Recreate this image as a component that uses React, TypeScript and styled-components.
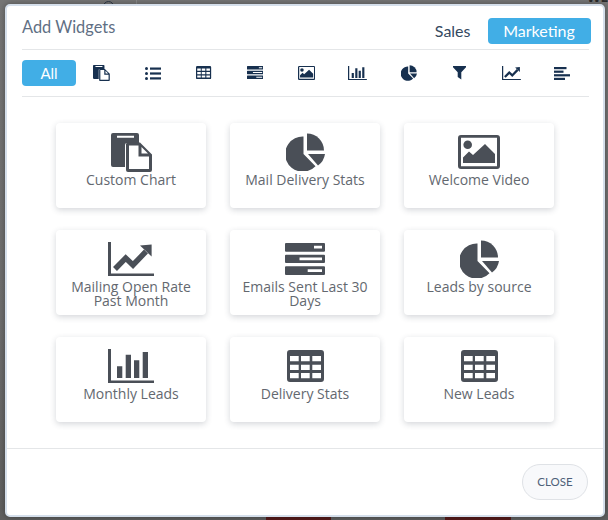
import React from "react";
import styled, { createGlobalStyle } from "styled-components";

const Global = createGlobalStyle`
  html, body { margin: 0; padding: 0; }
  body { background: #6b6b6b; font-family: "Open Sans", "Liberation Sans", sans-serif; }
`;

const Backdrop = styled.div`
  position: relative;
  width: 608px;
  height: 520px;
  overflow: hidden;
  background: linear-gradient(#767676 0, #6e6e6e 60%, #5f5f5f 100%);
  padding: 4px 3px 3px 5px;
  box-sizing: border-box;
`;

const BehindBlock = styled.div<{ $left: number; $width: number }>`
  position: absolute;
  left: ${(p) => p.$left}px;
  width: ${(p) => p.$width}px;
  bottom: 0;
  height: 5px;
  background: #551a1a;
`;

const BehindText = styled.div`
  position: absolute;
  top: -10px;
  left: 587px;
  font: 700 14px/14px "Open Sans", sans-serif;
  color: #2b2b2b;
`;

const BehindRing = styled.div`
  position: absolute;
  top: 1px;
  left: 103px;
  width: 9px;
  height: 9px;
  border: 1.5px solid #2f3a48;
  border-radius: 50%;
`;

const BehindRule = styled.div`
  position: absolute;
  top: 0;
  left: 136px;
  width: 1px;
  height: 5px;
  background: #8a8a8a;
`;

const Modal = styled.div`
  position: relative;
  height: 100%;
  box-sizing: border-box;
  background: #fff;
  border: 2px solid #d5dfeb;
  border-radius: 5px;
  display: flex;
  flex-direction: column;
  box-shadow: 0 0 6px rgba(0, 0, 0, 0.35);
`;

const Header = styled.div`
  margin: 0 14px 0 15px;
  height: 44px;
  box-sizing: border-box;
  border-bottom: 1px solid #e4e6e8;
  display: flex;
  justify-content: space-between;
  align-items: flex-start;
`;

const Title = styled.h2`
  margin: 11px 0 0;
  font: 400 16.4px/20px Lato, sans-serif;
  color: #5f6f84;
`;

const Tabs = styled.div`
  display: flex;
  align-items: center;
  gap: 17px;
  margin: 12px -1.5px 0 0;
`;

const Tab = styled.button<{ $active?: boolean }>`
  border: 0;
  padding: 0;
  height: 26px;
  width: ${(p) => (p.$active ? "103px" : "auto")};
  border-radius: 4px;
  background: ${(p) => (p.$active ? "#41aee6" : "transparent")};
  color: ${(p) => (p.$active ? "#fff" : "#34495f")};
  font: 400 16px/26px Lato, sans-serif;
`;

const FilterBar = styled.div`
  margin: 0 14px 0 15px;
  height: 47px;
  box-sizing: border-box;
  border-bottom: 1px solid #e4e6e8;
  display: flex;
  align-items: flex-start;
  padding-top: 10px;
`;

const AllButton = styled.button`
  width: 54px;
  height: 26px;
  border: 0;
  padding: 0;
  border-radius: 4px;
  background: #41aee6;
  color: #fff;
  font: 400 15px/26px Lato, sans-serif;
`;

const FilterIcon = styled.span`
  width: 51.2px;
  height: 26px;
  display: flex;
  align-items: center;
  justify-content: center;
  color: #17304f;
`;

const Grid = styled.div`
  flex: 1;
  display: grid;
  grid-template-columns: repeat(3, 150px);
  grid-auto-rows: 85px;
  column-gap: 24px;
  row-gap: 22px;
  padding: 26px 0 0 49px;
  align-content: start;
`;

const Card = styled.div`
  background: #fff;
  border-radius: 4px;
  box-shadow: 0 2px 6px rgba(40, 50, 70, 0.2);
  display: flex;
  flex-direction: column;
  align-items: center;
  padding-top: 9px;
  box-sizing: border-box;
`;

const CardIcon = styled.div`
  height: 40px;
  display: flex;
  align-items: center;
  justify-content: center;
  color: #4a4f57;
`;

const CardLabel = styled.div`
  margin-top: 1px;
  padding: 0 8px;
  font: 400 14px/14px "Open Sans", sans-serif;
  color: #63686f;
  text-align: center;
`;

const Footer = styled.div`
  height: 67px;
  box-sizing: border-box;
  border-top: 1px solid #e4e6e8;
  display: flex;
  justify-content: flex-end;
  align-items: flex-start;
  padding: 15px 15px 0 0;
`;

const CloseButton = styled.button`
  width: 66px;
  height: 36px;
  border-radius: 18px;
  border: 1px solid #dfe2e6;
  background: #f8f9fb;
  color: #4d6078;
  font: 400 11.5px/34px Lato, sans-serif;
  padding: 0;
`;

type IconName =
  | "copy" | "list" | "table" | "server" | "image" | "bars"
  | "pie" | "funnel" | "trend" | "align";

const ICONS: Record<IconName, { w: number; h: number; body: React.ReactNode }> = {
  copy: {
    w: 41, h: 39,
    body: (
      <>
        <path fillRule="evenodd" d="M2 0H26a2 2 0 0 1 2 2V10H16a2 2 0 0 0-2 2V34H2a2 2 0 0 1-2-2V2A2 2 0 0 1 2 0ZM6 2.7V4.7H23V2.7Z" />
        <path fillRule="evenodd" d="M16 9.5H29L41 21.5V37a2 2 0 0 1-2 2H17a2 2 0 0 1-2-2V11ZM18 12.5V36H38V23.5H27.5V12.5ZM30.5 14V20.5H37Z" />
      </>
    ),
  },
  list: {
    w: 16, h: 13,
    body: (
      <>
        <circle cx="1.5" cy="1.6" r="1.5" />
        <circle cx="1.5" cy="6.5" r="1.5" />
        <circle cx="1.5" cy="11.4" r="1.5" />
        <rect x="5" y="0.5" width="11" height="2.2" />
        <rect x="5" y="5.4" width="11" height="2.2" />
        <rect x="5" y="10.3" width="11" height="2.2" />
      </>
    ),
  },
  table: {
    w: 37, h: 32,
    body: (
      <path fillRule="evenodd" d="M3 0H34a3 3 0 0 1 3 3V29a3 3 0 0 1-3 3H3a3 3 0 0 1-3-3V3A3 3 0 0 1 3 0ZM3 6V11.3H11.7V6ZM14 6V11.3H22.7V6ZM25.3 6V11.3H34V6ZM3 14.7V20H11.7V14.7ZM14 14.7V20H22.7V14.7ZM25.3 14.7V20H34V14.7ZM3 23V28.3H11.7V23ZM14 23V28.3H22.7V23ZM25.3 23V28.3H34V23Z" />
    ),
  },
  server: {
    w: 40, h: 32,
    body: (
      <path fillRule="evenodd" d="M1 0H39a1 1 0 0 1 1 1V7.7a1 1 0 0 1-1 1H1a1 1 0 0 1-1-1V1A1 1 0 0 1 1 0ZM29 2.8V5.5H37V2.8ZM1 11.7H39a1 1 0 0 1 1 1V19a1 1 0 0 1-1 1H1a1 1 0 0 1-1-1V12.7a1 1 0 0 1 1-1ZM14.5 14.5V17.2H37V14.5ZM1 23.3H39a1 1 0 0 1 1 1V31a1 1 0 0 1-1 1H1a1 1 0 0 1-1-1V24.3a1 1 0 0 1 1-1ZM22.7 26.2V28.9H37V26.2Z" />
    ),
  },
  image: {
    w: 42, h: 34,
    body: (
      <>
        <path fillRule="evenodd" d="M3 0H39a3 3 0 0 1 3 3V31a3 3 0 0 1-3 3H3a3 3 0 0 1-3-3V3A3 3 0 0 1 3 0ZM3 2.7V31.3H39V2.7Z" />
        <circle cx="9.7" cy="9.7" r="4.3" />
        <path d="M5 28V22.5L11 16.5L15 20L27 9L37 19V28Z" />
      </>
    ),
  },
  bars: {
    w: 46, h: 34,
    body: (
      <path d="M0 0H3V31.5H46V34H0ZM9 17.3H14.3V29H9ZM17.7 5.7H23V29H17.7ZM26 11.3H31.3V29H26ZM34.7 3H40V29H34.7Z" />
    ),
  },
  pie: {
    w: 39, h: 38,
    body: (
      <>
        <path d="M17.5 3.5V21L29.5 33.2A17.6 17.6 0 1 1 17.5 3.5Z" />
        <path d="M21 0.5A17 17 0 0 1 38 17.5H21Z" />
        <path d="M22 21H39A17.5 17.5 0 0 1 32 32.6Z" />
      </>
    ),
  },
  funnel: {
    w: 13, h: 13.5,
    body: <path d="M0 0H13V1.3L8.3 6.3V13.5L4.7 11V6.3L0 1.3Z" />,
  },
  trend: {
    w: 46, h: 34,
    body: (
      <>
        <path d="M0 0H3V31.5H46V34H0Z" />
        <polyline points="7,27 17.7,16 25,23 38,9.5" fill="none" stroke="currentColor" strokeWidth="5.5" />
        <path d="M32 3.5L43.6 2.5V14.5Z" />
      </>
    ),
  },
  align: {
    w: 16, h: 13,
    body: (
      <>
        <rect width="12.5" height="2.2" y="0" />
        <rect width="9.5" height="2.2" y="3.6" />
        <rect width="16" height="2.2" y="7.2" />
        <rect width="11" height="2.2" y="10.8" />
      </>
    ),
  },
};

const Glyph = ({ name, scale = 1 }: { name: IconName; scale?: number }) => {
  const { w, h, body } = ICONS[name];
  return (
    <svg width={w * scale} height={h * scale} viewBox={`0 0 ${w} ${h}`} fill="currentColor" aria-hidden>
      {body}
    </svg>
  );
};

const FILTERS: { name: IconName; scale: number }[] = [
  { name: "copy", scale: 0.41 },
  { name: "list", scale: 1 },
  { name: "table", scale: 0.41 },
  { name: "server", scale: 0.41 },
  { name: "image", scale: 0.41 },
  { name: "bars", scale: 0.41 },
  { name: "pie", scale: 0.41 },
  { name: "funnel", scale: 1 },
  { name: "trend", scale: 0.41 },
  { name: "align", scale: 1 },
];

const CARDS: { icon: IconName; label: string }[] = [
  { icon: "copy", label: "Custom Chart" },
  { icon: "pie", label: "Mail Delivery Stats" },
  { icon: "image", label: "Welcome Video" },
  { icon: "trend", label: "Mailing Open Rate Past Month" },
  { icon: "server", label: "Emails Sent Last 30 Days" },
  { icon: "pie", label: "Leads by source" },
  { icon: "bars", label: "Monthly Leads" },
  { icon: "table", label: "Delivery Stats" },
  { icon: "table", label: "New Leads" },
];

export default function App() {
  return (
    <Backdrop>
      <Global />
      <BehindRing />
      <BehindRule />
      <BehindText>WEL</BehindText>
      <BehindBlock $left={266} $width={65} />
      <BehindBlock $left={445} $width={66} />
      <Modal>
        <Header>
          <Title>Add Widgets</Title>
          <Tabs>
            <Tab>Sales</Tab>
            <Tab $active>Marketing</Tab>
          </Tabs>
        </Header>
        <FilterBar>
          <AllButton>All</AllButton>
          {FILTERS.map((f) => (
            <FilterIcon key={f.name}>
              <Glyph name={f.name} scale={f.scale} />
            </FilterIcon>
          ))}
        </FilterBar>
        <Grid>
          {CARDS.map((c) => (
            <Card key={c.label}>
              <CardIcon>
                <Glyph name={c.icon} />
              </CardIcon>
              <CardLabel>{c.label}</CardLabel>
            </Card>
          ))}
        </Grid>
        <Footer>
          <CloseButton>CLOSE</CloseButton>
        </Footer>
      </Modal>
    </Backdrop>
  );
}
